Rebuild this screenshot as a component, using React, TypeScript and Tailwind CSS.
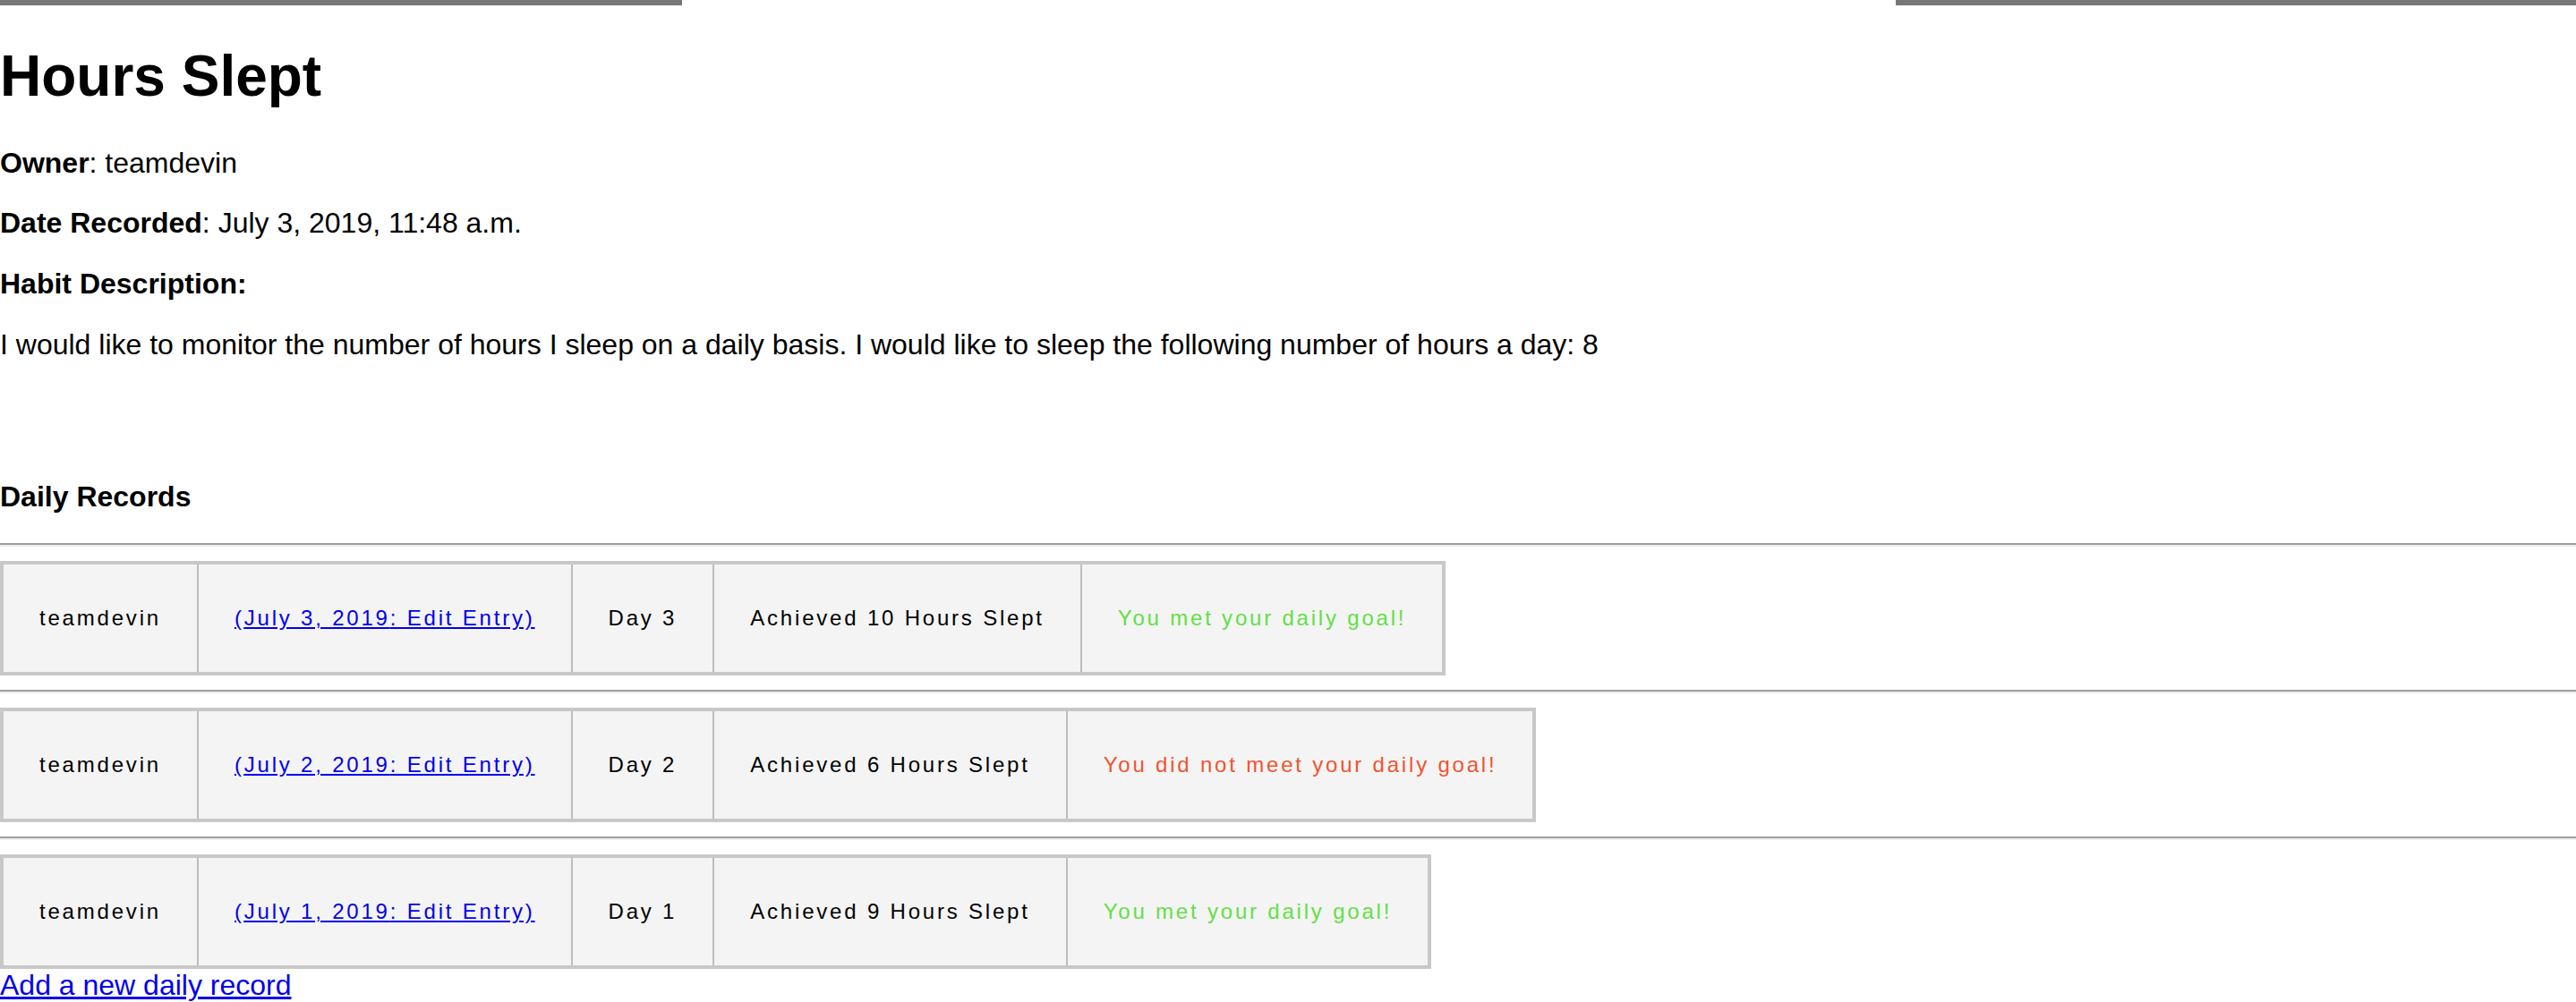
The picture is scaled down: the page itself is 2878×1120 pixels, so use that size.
const records = [
  { owner: 'teamdevin', date: 'July 3, 2019', day: 3, hours: 10, met: true },
  { owner: 'teamdevin', date: 'July 2, 2019', day: 2, hours: 6, met: false },
  { owner: 'teamdevin', date: 'July 1, 2019', day: 1, hours: 9, met: true },
]

const cell =
  'border-l-2 border-[#bdbdbd] px-[40px] py-[40px] text-center align-middle leading-[40px] whitespace-nowrap first:border-l-0'

function Divider() {
  return <div className="my-[16px] h-[4px] w-full border-t-2 border-b-2 border-t-[#9e9e9e] border-b-[#ececec]" />
}

function RecordTable({ record }: { record: (typeof records)[number] }) {
  return (
    <table className="self-start border-separate border-spacing-0 border-4 border-[#c8c8c8] bg-[#f4f4f4] text-[24px] tracking-[2.8px] text-black">
      <tbody>
        <tr>
          <td className={cell}>{record.owner}</td>
          <td className={cell}>
            <a href="#" className="text-[#0000ee] underline">
              ({record.date}: Edit Entry)
            </a>
          </td>
          <td className={cell}>Day {record.day}</td>
          <td className={cell}>Achieved {record.hours} Hours Slept</td>
          <td className={cell}>
            {record.met ? (
              <span className="text-[#62e046]">You met your daily goal!</span>
            ) : (
              <span className="text-[#f0542f]">You did not meet your daily goal!</span>
            )}
          </td>
        </tr>
      </tbody>
    </table>
  )
}

export default function App() {
  return (
    <div
      className="flex min-h-[1120px] w-full flex-col bg-white text-black"
      style={{ fontFamily: '"Liberation Sans", Arial, Helvetica, sans-serif' }}
    >
      <div className="flex h-[6px] justify-between">
        <div className="w-[762px] bg-[#777777]" />
        <div className="w-[760px] bg-[#777777]" />
      </div>

      <h1 className="mt-[43px] text-[64px] font-bold leading-[73.5px]">Hours Slept</h1>

      <p className="mt-[41px] text-[32px] leading-[36.8px]">
        <strong>Owner</strong>: teamdevin
      </p>
      <p className="mt-[31px] text-[32px] leading-[36.8px]">
        <strong>Date Recorded</strong>: July 3, 2019, 11:48 a.m.
      </p>
      <p className="mt-[31px] text-[32px] font-bold leading-[36.8px]">Habit Description:</p>
      <p className="mt-[31px] text-[32px] leading-[36.8px]">
        I would like to monitor the number of hours I sleep on a daily basis. I would like to sleep the
        following number of hours a day: 8
      </p>

      <h4 className="mt-[133px] text-[32px] font-bold leading-[36.8px]">Daily Records</h4>

      <div className="mt-[18px] flex flex-col">
        {records.map((r) => (
          <div key={r.day} className="flex flex-col">
            <Divider />
            <RecordTable record={r} />
          </div>
        ))}
      </div>

      <a href="#" className="self-start text-[32px] leading-[36.8px] text-[#0000ee] underline">
        Add a new daily record
      </a>
    </div>
  )
}
